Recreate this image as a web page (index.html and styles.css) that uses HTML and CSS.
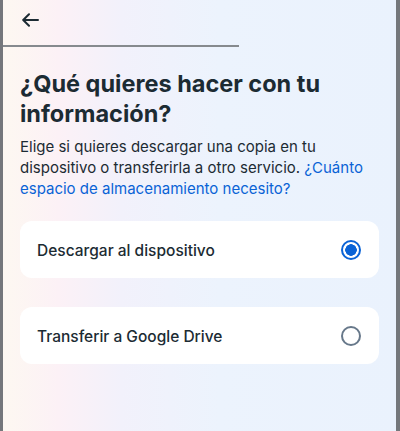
FILE: index.html
```html
<!DOCTYPE html>
<html lang="es">
<head>
<meta charset="utf-8">
<link rel="stylesheet" href="styles.css">
</head>
<body>
<div class="frame">
  <header class="topbar">
    <button class="back" aria-label="Atrás">
      <svg width="18" height="14" viewBox="0 0 18 14"><path d="M17 7H2.5M8 1.2L2.2 7L8 12.8" fill="none" stroke="#1c2b33" stroke-width="2" stroke-linecap="round" stroke-linejoin="round"/></svg>
    </button>
  </header>
  <div class="divider"></div>
  <main class="content">
    <h1 class="title">¿Qué quieres hacer con tu información?</h1>
    <p class="desc">Elige si quieres descargar una copia en tu dispositivo o transferirla a otro servicio. <a class="link" href="#">¿Cuánto espacio de almacenamiento necesito?</a></p>
    <div class="options">
      <div class="option">
        <span class="label">Descargar al dispositivo</span>
        <span class="radio checked"></span>
      </div>
      <div class="option">
        <span class="label">Transferir a Google Drive</span>
        <span class="radio"></span>
      </div>
    </div>
  </main>
</div>
</body>
</html>
```
FILE: styles.css
```css
html, body {
  margin: 0;
  padding: 0;
}
body {
  width: 400px;
  height: 431px;
  overflow: hidden;
  font-family: Inter, "Noto Sans", Roboto, sans-serif;
  color: #1c2b33;
}
.frame {
  box-sizing: border-box;
  height: 431px;
  border-left: 3px solid #74777b;
  border-right: 4px solid #74777b;
  background: linear-gradient(90deg, #fdf8f1 0%, #fcf1f6 14%, #f2f1fb 30%, #ecf3fd 55%, #eaf2fd 100%);
}
.topbar {
  height: 45px;
  display: flex;
  align-items: center;
  padding-left: 18px;
}
.back {
  border: 0;
  background: none;
  padding: 0;
  margin-top: -5px;
  display: flex;
}
.divider {
  width: 236px;
  height: 2px;
  background: #868a8e;
}
.content {
  padding: 0 17px;
}
.title {
  margin: 22px 0 0;
  font-size: 23.5px;
  line-height: 30px;
  font-weight: 700;
  letter-spacing: 0;
}
.desc {
  margin: 7px 0 0;
  font-size: 15px;
  line-height: 21px;
  color: #1c2b33;
}
.link {
  color: #0a63d6;
  text-decoration: none;
}
.options {
  display: flex;
  flex-direction: column;
  gap: 29px;
  margin-top: 22px;
}
.option {
  height: 57px;
  box-sizing: border-box;
  background: #fff;
  border-radius: 12px;
  display: flex;
  align-items: center;
  justify-content: space-between;
  padding: 0 18px 0 17px;
}
.label {
  font-size: 15.5px;
  font-weight: 500;
  color: #1c2b33;
  margin-top: 2px;
}
.radio {
  box-sizing: border-box;
  width: 20px;
  height: 20px;
  border-radius: 50%;
  border: 2px solid #67788a;
  margin-top: 0;
}
.radio.checked {
  border-color: #0a63d6;
  background: radial-gradient(circle, #0a63d6 0 5.5px, #fff 6px);
}
```
